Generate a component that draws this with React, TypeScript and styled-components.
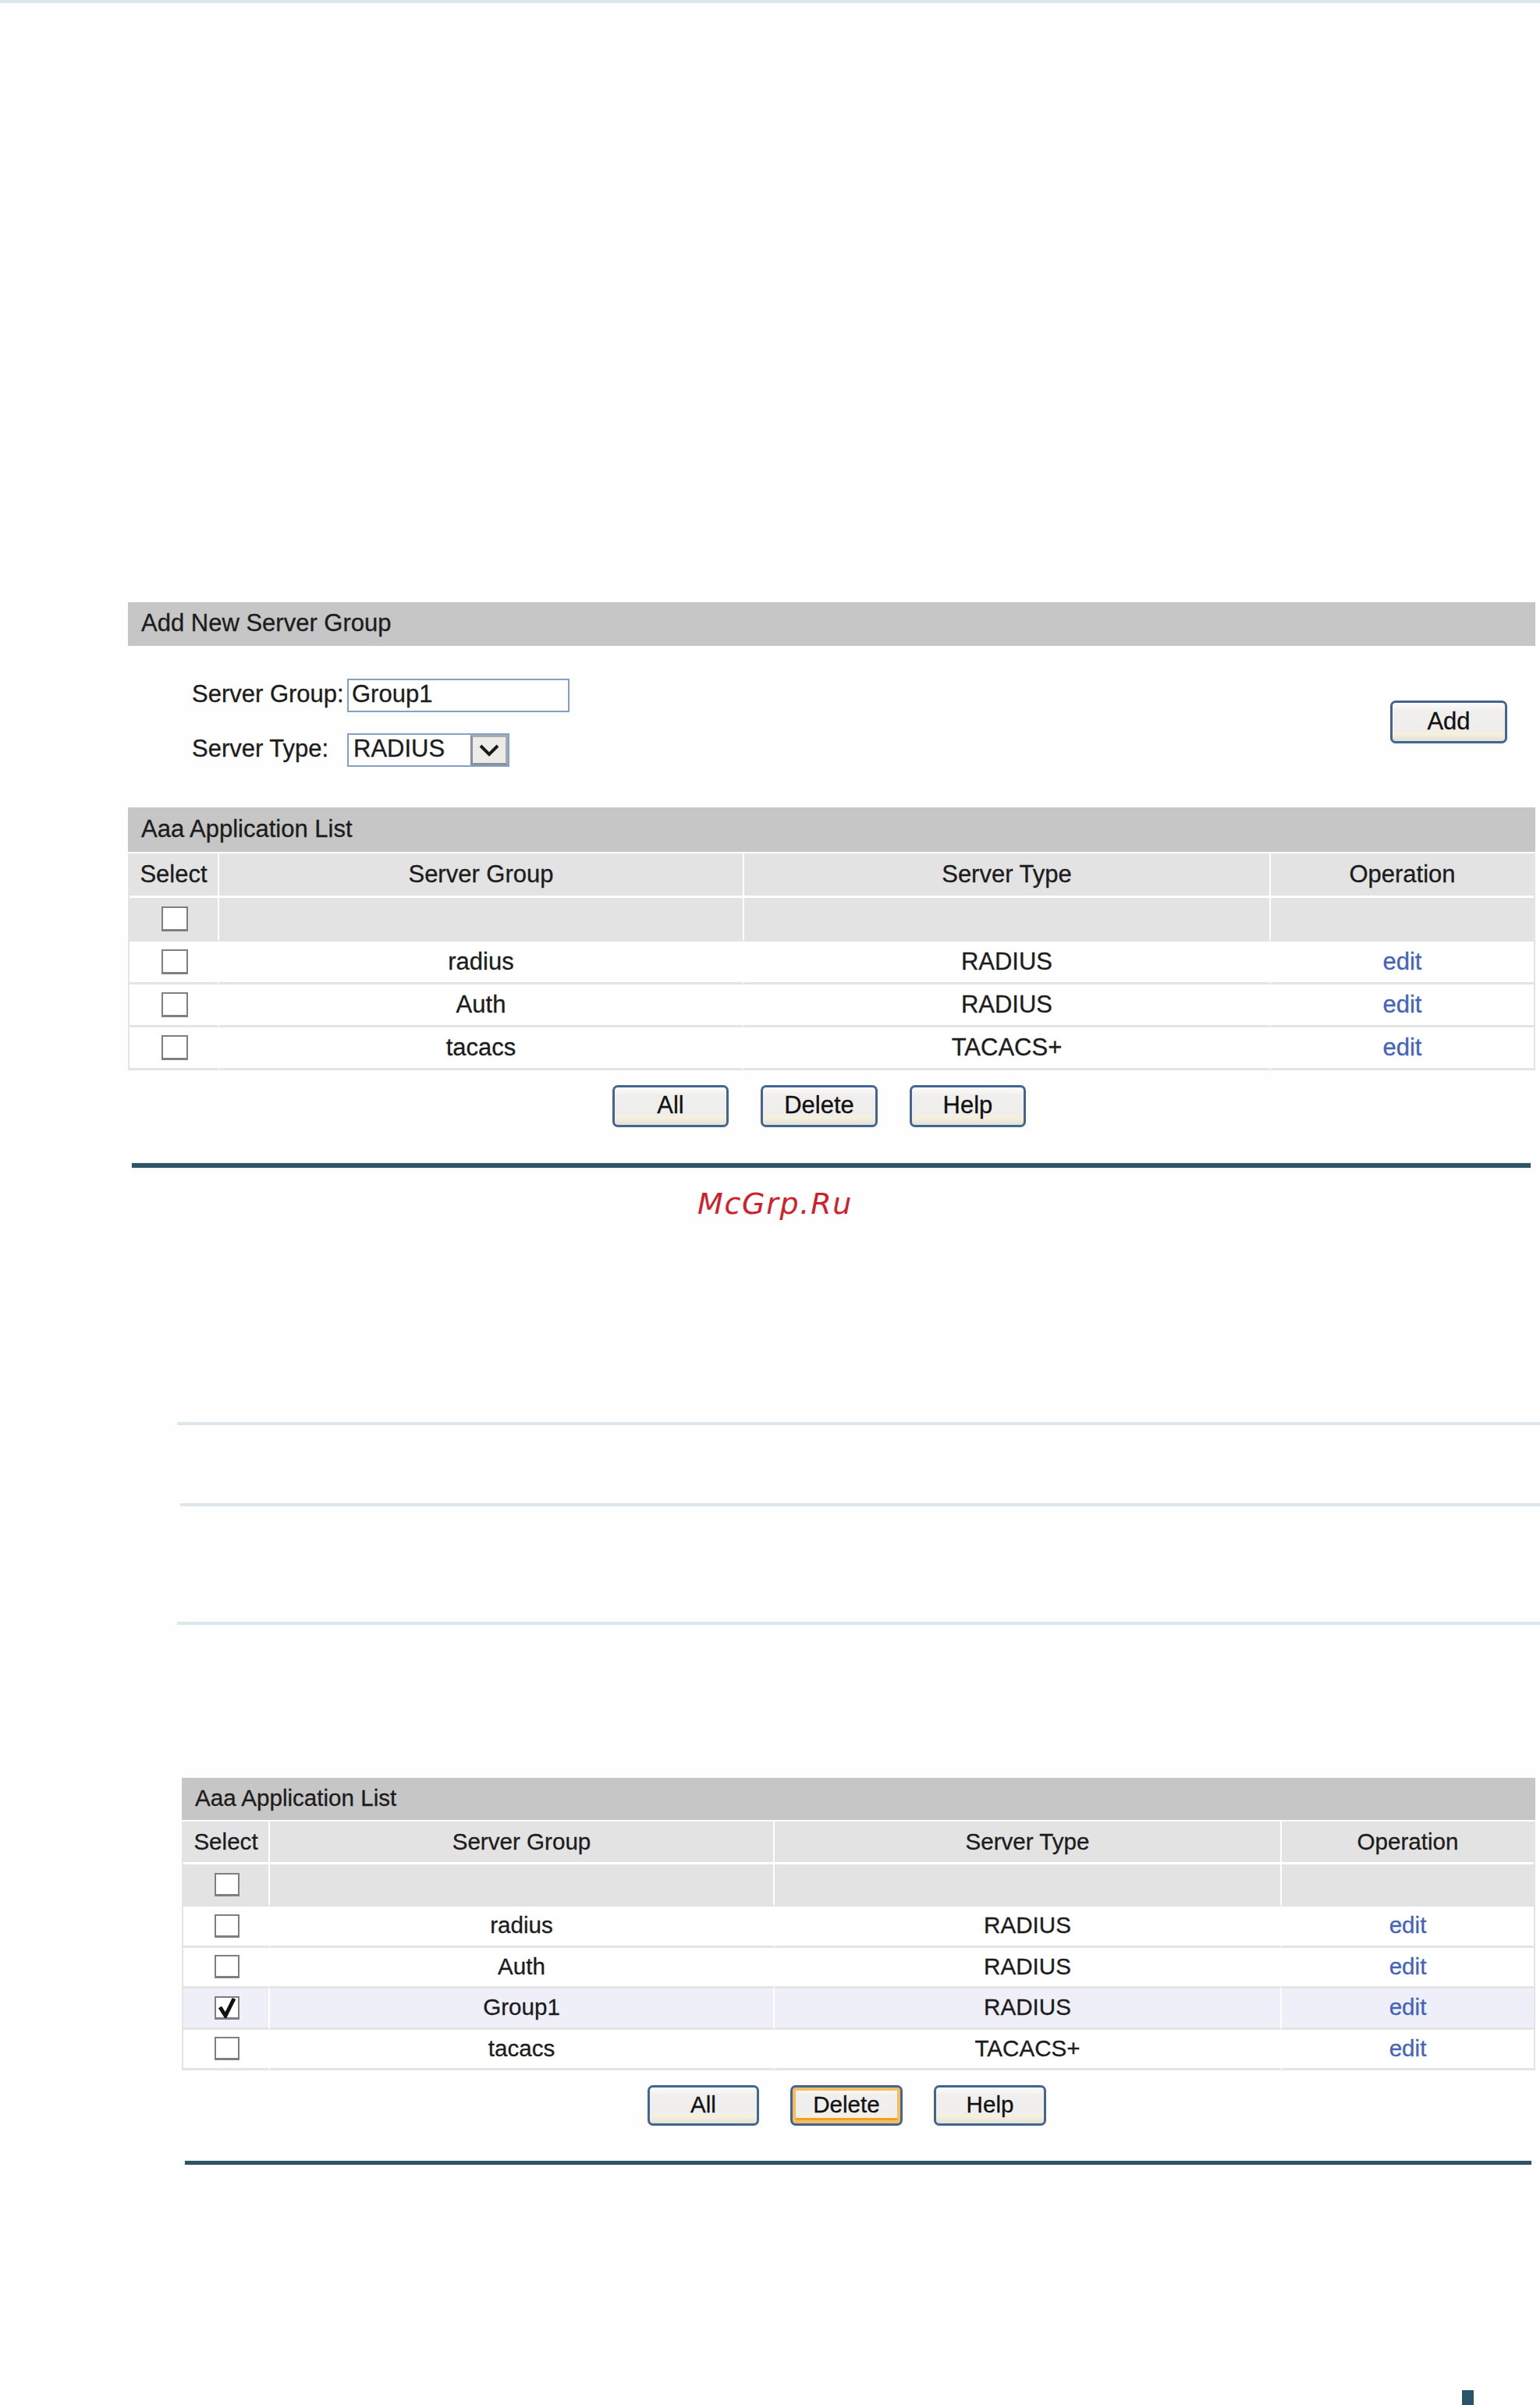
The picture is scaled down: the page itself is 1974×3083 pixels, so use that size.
import React from "react";
import styled, { createGlobalStyle } from "styled-components";

const GlobalStyle = createGlobalStyle`
  html, body {
    margin: 0;
    padding: 0;
    background: #fefefe;
  }
  * {
    box-sizing: border-box;
  }
`;

const Page = styled.div`
  width: 1974px;
  height: 3083px;
  overflow: hidden;
  display: flex;
  flex-direction: column;
  background: #fefefe;
  color: #1c1c1c;
  font-family: "Liberation Sans", Arial, sans-serif;
  -webkit-text-stroke: 0.3px currentColor;
`;

const ThinRule = styled.div<{ $top: number; $left: number }>`
  height: 4px;
  margin: ${(p) => p.$top}px 0 0 ${(p) => p.$left}px;
  background: #dce6eb;
  flex: none;
`;

const ThickRule = styled.div<{ $top: number; $left: number; $width: number; $height: number }>`
  height: ${(p) => p.$height}px;
  width: ${(p) => p.$width}px;
  margin: ${(p) => p.$top}px 0 0 ${(p) => p.$left}px;
  background: #2f5468;
  box-shadow: 0 0 1px #8fa5b1;
  flex: none;
`;

const Watermark = styled.div`
  margin: 25px 0 0 894px;
  font-family: "DejaVu Sans", sans-serif;
  font-style: italic;
  font-size: 38px;
  line-height: 42px;
  letter-spacing: 1.7px;
  color: #d0212a;
  -webkit-text-stroke: 0;
  flex: none;
`;

const Panel = styled.section<{ $top: number; $left: number; $width: number; $font: number }>`
  width: ${(p) => p.$width}px;
  margin: ${(p) => p.$top}px 0 0 ${(p) => p.$left}px;
  font-size: ${(p) => p.$font}px;
  flex: none;
`;

const SectionHeader = styled.h2<{ $height: number; $inset: number }>`
  margin: 0;
  height: ${(p) => p.$height}px;
  padding: 0 0 2px ${(p) => p.$inset}px;
  display: flex;
  align-items: center;
  background: #c6c6c6;
  font-size: inherit;
  font-weight: 400;
`;

const FormBlock = styled.div`
  height: 207px;
  display: flex;
  justify-content: space-between;
  align-items: flex-start;
  padding: 42px 36px 0 82px;
`;

const Fields = styled.div`
  display: grid;
  grid-template-columns: 199px auto;
  grid-auto-rows: 43px;
  row-gap: 27px;
  align-items: center;
  justify-items: start;
`;

const FieldLabel = styled.label`
  white-space: nowrap;
  margin-top: -3px;
`;

const TextInput = styled.input`
  width: 285px;
  height: 43px;
  padding: 0 4px 3px;
  border: 2px solid #84a0c2;
  background: #fff;
  font: inherit;
  color: inherit;
  -webkit-text-stroke: inherit;
  outline: none;
`;

const SelectBox = styled.div`
  width: 208px;
  height: 43px;
  display: flex;
  align-items: center;
  justify-content: space-between;
  padding-left: 6px;
  border: 2px solid #84a0c2;
  background: #fff;
`;

const SelectValue = styled.span`
  margin-top: -4px;
`;

const SelectArrow = styled.span`
  width: 48px;
  height: 39px;
  display: flex;
  align-items: center;
  justify-content: center;
  background: #ecebe7;
  border: 3px solid #87919c;
  border-right-color: #a3abb5;
  border-top-color: #a3abb5;
`;

const AddSlot = styled.div`
  margin-top: 28px;
`;

const ListBody = styled.div`
  margin-top: 2px;
`;

const Row = styled.div<{ $columns: string; $height: number; $tone: "head" | "plain" | "picked" }>`
  display: grid;
  grid-template-columns: ${(p) => p.$columns};
  height: ${(p) => p.$height}px;
  border-left: 2px solid #e4e4e4;
  border-right: 2px solid #e4e4e4;
  background: ${(p) => (p.$tone === "head" ? "#e3e3e3" : p.$tone === "picked" ? "#eeeff9" : "#fff")};
`;

const Cell = styled.div<{ $line: string }>`
  display: flex;
  align-items: center;
  justify-content: center;
  border-right: 2px solid #fff;
  border-bottom: 3px solid ${(p) => p.$line};
  white-space: nowrap;

  &:last-child {
    border-right: 0;
  }
`;

const CellText = styled.span`
  margin-top: -1px;
`;

const EditLink = styled.a`
  color: #4464b8;
  text-decoration: none;
  margin-top: -1px;
`;

const CheckBox = styled.span<{ $size: number }>`
  width: ${(p) => p.$size}px;
  height: ${(p) => p.$size - 2}px;
  margin-left: 2px;
  display: flex;
  align-items: center;
  justify-content: center;
  border: 2px solid #7e7e86;
  border-bottom-width: 3px;
  background: #fff;
`;

const ButtonRow = styled.div<{ $top: number; $offset: number; $gap: number }>`
  display: flex;
  gap: ${(p) => p.$gap}px;
  margin-top: ${(p) => p.$top}px;
  padding-left: ${(p) => p.$offset}px;
`;

const PushButton = styled.button<{ $width: number; $height: number; $focused?: boolean }>`
  width: ${(p) => p.$width}px;
  height: ${(p) => p.$height}px;
  padding: 0 0 2px;
  border: 3px solid #456591;
  border-radius: 7px;
  background: linear-gradient(#fbfbfa 0%, #f0efed 22%, #efeeec 68%, #f5f0dd 82%, #e2e0d8 100%);
  box-shadow: ${(p) =>
    p.$focused ? "inset 0 0 0 4px #f5bd62, inset 0 4px 0 #f8d58f, inset 0 -7px 0 #ee9f30" : "none"};
  font: inherit;
  color: #111;
  -webkit-text-stroke: inherit;
`;

const FootMark = styled.div`
  width: 15px;
  height: 19px;
  margin: 289px 0 0 1874px;
  background: #2b5468;
  flex: none;
`;

const Chevron = () => (
  <svg width="26" height="18" viewBox="0 0 26 18">
    <path d="M2 3 L13 14 L24 3" fill="none" stroke="#1a1a1a" strokeWidth="4" />
  </svg>
);

const Tick = () => (
  <svg width="26" height="28" viewBox="0 0 26 28">
    <path d="M4 14 L11 25 L22 3" fill="none" stroke="#111" strokeWidth="5" />
  </svg>
);

type ListEntry = { name: string; type: string; picked?: boolean };

type ListProps = {
  columns: string;
  headHeights: [number, number];
  rowHeight: number;
  box: number;
  entries: ListEntry[];
};

const AppList = ({ columns, headHeights, rowHeight, box, entries }: ListProps) => (
  <ListBody>
    <Row $columns={columns} $height={headHeights[0]} $tone="head">
      <Cell $line="#fff"><CellText>Select</CellText></Cell>
      <Cell $line="#fff"><CellText>Server Group</CellText></Cell>
      <Cell $line="#fff"><CellText>Server Type</CellText></Cell>
      <Cell $line="#fff"><CellText>Operation</CellText></Cell>
    </Row>
    <Row $columns={columns} $height={headHeights[1]} $tone="head">
      <Cell $line="#e3e3e3">
        <CheckBox $size={box} />
      </Cell>
      <Cell $line="#e3e3e3" />
      <Cell $line="#e3e3e3" />
      <Cell $line="#e3e3e3" />
    </Row>
    {entries.map((entry) => (
      <Row key={entry.name} $columns={columns} $height={rowHeight} $tone={entry.picked ? "picked" : "plain"}>
        <Cell $line="#e4e4e4">
          <CheckBox $size={box}>{entry.picked && <Tick />}</CheckBox>
        </Cell>
        <Cell $line="#e4e4e4"><CellText>{entry.name}</CellText></Cell>
        <Cell $line="#e4e4e4"><CellText>{entry.type}</CellText></Cell>
        <Cell $line="#e4e4e4">
          <EditLink href="#">edit</EditLink>
        </Cell>
      </Row>
    ))}
  </ListBody>
);

const firstEntries: ListEntry[] = [
  { name: "radius", type: "RADIUS" },
  { name: "Auth", type: "RADIUS" },
  { name: "tacacs", type: "TACACS+" },
];

const secondEntries: ListEntry[] = [
  { name: "radius", type: "RADIUS" },
  { name: "Auth", type: "RADIUS" },
  { name: "Group1", type: "RADIUS", picked: true },
  { name: "tacacs", type: "TACACS+" },
];

export default function App() {
  return (
    <Page>
      <GlobalStyle />
      <ThinRule $top={0} $left={0} />

      <Panel $top={768} $left={164} $width={1804} $font={31}>
        <SectionHeader $height={56} $inset={17}>Add New Server Group</SectionHeader>
        <FormBlock>
          <Fields>
            <FieldLabel>Server Group:</FieldLabel>
            <TextInput defaultValue="Group1" />
            <FieldLabel>Server Type:</FieldLabel>
            <SelectBox>
              <SelectValue>RADIUS</SelectValue>
              <SelectArrow>
                <Chevron />
              </SelectArrow>
            </SelectBox>
          </Fields>
          <AddSlot>
            <PushButton $width={150} $height={55}>Add</PushButton>
          </AddSlot>
        </FormBlock>
        <SectionHeader $height={57} $inset={17}>Aaa Application List</SectionHeader>
        <AppList
          columns="115px 673px 675px 1fr"
          headHeights={[57, 56]}
          rowHeight={55}
          box={34}
          entries={firstEntries}
        />
        <ButtonRow $top={19} $offset={621} $gap={41}>
          <PushButton $width={149} $height={54}>All</PushButton>
          <PushButton $width={150} $height={54}>Delete</PushButton>
          <PushButton $width={149} $height={54}>Help</PushButton>
        </ButtonRow>
      </Panel>

      <ThickRule $top={46} $left={169} $width={1793} $height={6} />
      <Watermark>McGrp.Ru</Watermark>

      <ThinRule $top={259} $left={227} />
      <ThinRule $top={100} $left={231} />
      <ThinRule $top={148} $left={227} />

      <Panel $top={196} $left={233} $width={1735} $font={29.6}>
        <SectionHeader $height={54} $inset={17}>Aaa Application List</SectionHeader>
        <AppList
          columns="111px 647px 650px 1fr"
          headHeights={[55, 54]}
          rowHeight={52.5}
          box={32}
          entries={secondEntries}
        />
        <ButtonRow $top={19} $offset={597} $gap={40}>
          <PushButton $width={143} $height={52}>All</PushButton>
          <PushButton $width={144} $height={52} $focused>Delete</PushButton>
          <PushButton $width={144} $height={52}>Help</PushButton>
        </ButtonRow>
      </Panel>

      <ThickRule $top={45} $left={237} $width={1726} $height={5} />
      <FootMark />
    </Page>
  );
}
